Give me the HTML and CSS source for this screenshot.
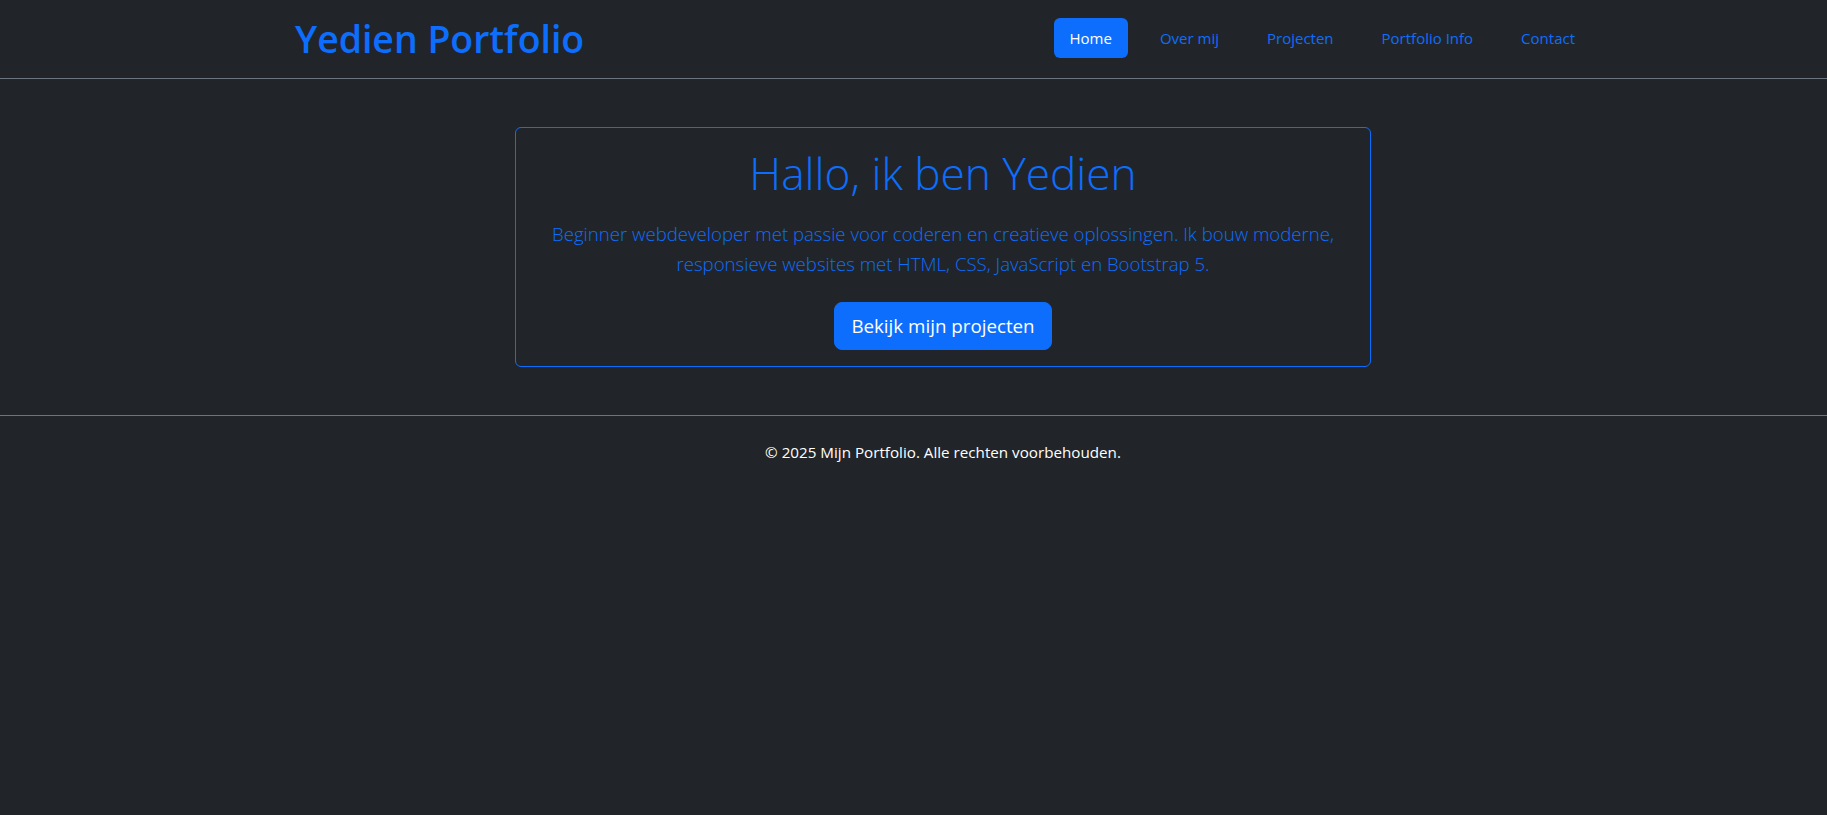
FILE: index.html
```html
<!DOCTYPE html>
<html lang="nl">
<head>
<meta charset="utf-8">
<title>Yedien Portfolio</title>
<link rel="stylesheet" href="styles.css">
</head>
<body>
<header class="site-header">
  <div class="container navbar">
    <a class="brand" href="#">Yedien Portfolio</a>
    <ul class="nav">
      <li><a class="nav-link active" href="#">Home</a></li>
      <li><a class="nav-link" href="#">Over mij</a></li>
      <li><a class="nav-link" href="#">Projecten</a></li>
      <li><a class="nav-link" href="#">Portfolio Info</a></li>
      <li><a class="nav-link" href="#">Contact</a></li>
    </ul>
  </div>
</header>
<main class="site-main">
  <div class="container">
    <section class="hero-card">
      <h1 class="hero-title">Hallo, ik ben Yedien</h1>
      <p class="lead">Beginner webdeveloper met passie voor coderen en creatieve oplossingen. Ik bouw moderne, responsieve websites met HTML, CSS, JavaScript en Bootstrap 5.</p>
      <a class="btn-primary" href="#">Bekijk mijn projecten</a>
    </section>
  </div>
</main>
<footer class="site-footer">
  <div class="container">
    <p class="copyright">© 2025 Mijn Portfolio. Alle rechten voorbehouden.</p>
  </div>
</footer>
</body>
</html>
```
FILE: styles.css
```css
* { box-sizing: border-box; }
html, body { margin: 0; padding: 0; }
body {
  background: #212529;
  color: #dee2e6;
  font-family: "Open Sans", "Noto Sans", sans-serif;
  min-height: 815px;
}
a { text-decoration: none; }

.site-header, .site-main, .site-footer { padding-left: 59px; }

.container {
  max-width: 1320px;
  margin: 0 auto;
  padding: 0 12px;
}

/* header */
.site-header { border-bottom: 1px solid #6c757d; }
.navbar {
  height: 78px;
  display: flex;
  align-items: center;
  justify-content: space-between;
}
.brand {
  color: #0d6efd;
  font-size: 37.4px;
  font-weight: 600;
  line-height: 50px;
  padding-bottom: 1px;
}
.nav {
  list-style: none;
  margin: 0 0 2px 0;
  padding: 0;
  display: flex;
  gap: 16px;
}
.nav-link {
  display: block;
  color: #0d6efd;
  font-size: 15px;
  line-height: 24px;
  padding: 8px 16px;
  border-radius: 6px;
}
.nav-link.active {
  background: #0d6efd;
  color: #fff;
}

/* hero */
.site-main { padding-top: 48px; padding-bottom: 48px; }
.hero-card {
  width: 856px;
  margin: 0 auto;
  border: 1px solid #0d6efd;
  border-radius: 6px;
  padding: 16px;
  text-align: center;
  color: #0d6efd;
}
.hero-title {
  margin: 0 0 16px;
  font-size: 44.2px;
  font-weight: 300;
  line-height: 59px;
}
.lead {
  margin: 0 auto 23px;
  font-size: 18.6px;
  font-weight: 300;
  line-height: 30px;
  max-width: 800px;
}
.btn-primary {
  display: inline-block;
  background: #0d6efd;
  border: 1px solid #0d6efd;
  color: #fff;
  font-size: 18.75px;
  line-height: 30px;
  padding: 8px 16px;
  border-radius: 8px;
}

/* footer */
.site-footer { border-top: 1px solid #6c757d; }
.copyright {
  margin: 0;
  padding: 24px 0;
  text-align: center;
  color: #fff;
  font-size: 15.2px;
  line-height: 24px;
}
```
